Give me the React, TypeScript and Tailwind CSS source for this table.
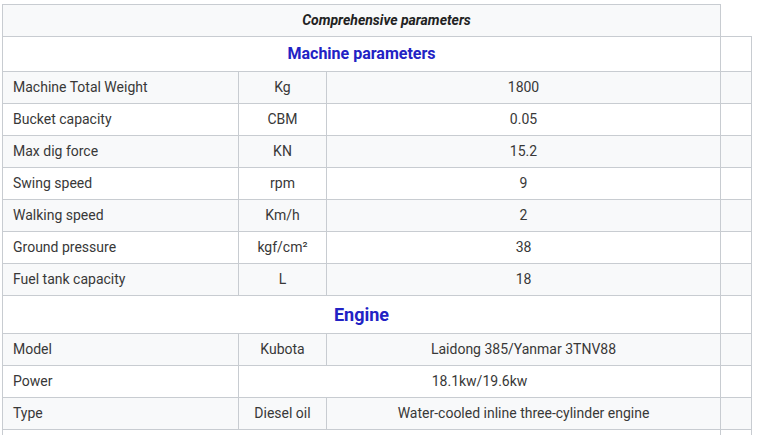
import React from "react";

type Row = { k: string; u?: string; v: string; span?: boolean };

const machine: Row[] = [
  { k: "Machine Total Weight", u: "Kg", v: "1800" },
  { k: "Bucket capacity", u: "CBM", v: "0.05" },
  { k: "Max dig force", u: "KN", v: "15.2" },
  { k: "Swing speed", u: "rpm", v: "9" },
  { k: "Walking speed", u: "Km/h", v: "2" },
  { k: "Ground pressure", u: "kgf/cm²", v: "38" },
  { k: "Fuel tank capacity", u: "L", v: "18" },
];

const engine: Row[] = [
  { k: "Model", u: "Kubota", v: "Laidong 385/Yanmar 3TNV88" },
  { k: "Power", v: "18.1kw/19.6kw", span: true },
  { k: "Type", u: "Diesel oil", v: "Water-cooled inline three-cylinder engine" },
];

const td = "border border-[#c8ccd1] px-[10px] py-0";

function DataRow({ r, gray }: { r: Row; gray: boolean }) {
  return (
    <tr className={`h-[32px] ${gray ? "bg-[#f8f9fa]" : "bg-white"}`}>
      <td className={`${td} text-left`}>{r.k}</td>
      {r.span ? (
        <td className={`${td} text-center`} colSpan={2}>
          {r.v}
        </td>
      ) : (
        <>
          <td className={`${td} text-center`}>{r.u}</td>
          <td className={`${td} text-center`}>{r.v}</td>
        </>
      )}
      <td className={td}></td>
    </tr>
  );
}

export default function App() {
  return (
    <div className="w-[757px] h-[435px] overflow-hidden bg-white pl-[2px] pt-[4px] font-['Roboto',sans-serif] text-[14px] text-[#383838]">
      <table className="border-collapse table-fixed w-[750px]">
        <colgroup>
          <col className="w-[236px]" />
          <col className="w-[88px]" />
          <col className="w-[394px]" />
          <col className="w-[31px]" />
        </colgroup>
        <tbody>
          <tr className="h-[32px] bg-[#f8f9fa]">
            <td
              colSpan={3}
              className="border border-[#c8ccd1] py-0 pl-[60px] pr-[10px] text-center text-[14px] font-bold italic text-[#222222]"
            >
              Comprehensive parameters
            </td>
          </tr>
          <tr className="h-[35px] bg-white">
            <td colSpan={3} className={`${td} text-center text-[16px] font-bold text-[#2222c4]`}>
              Machine parameters
            </td>
            <td className={td}></td>
          </tr>
          {machine.map((r, i) => (
            <DataRow key={r.k} r={r} gray={i % 2 === 0} />
          ))}
          <tr className="h-[38px] bg-white">
            <td colSpan={3} className={`${td} text-center text-[18px] font-bold text-[#2222c4]`}>
              Engine
            </td>
            <td className={td}></td>
          </tr>
          {engine.map((r, i) => (
            <DataRow key={r.k} r={r} gray={i % 2 === 0} />
          ))}
          <tr className="h-[32px] bg-white">
            <td colSpan={3} className={td}></td>
            <td className={td}></td>
          </tr>
        </tbody>
      </table>
    </div>
  );
}
